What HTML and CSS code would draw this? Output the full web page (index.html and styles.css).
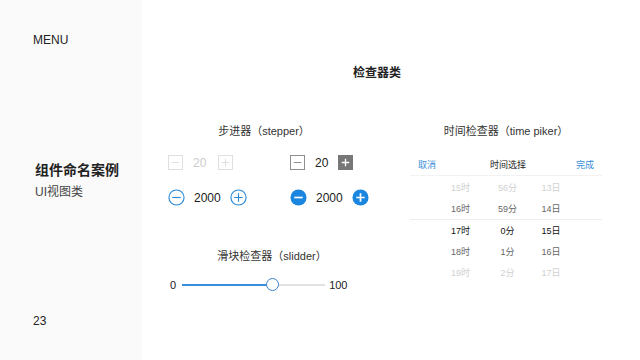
FILE: index.html
```html
<!DOCTYPE html>
<html lang="zh">
<head>
    <meta charset="UTF-8">
    <title>组件命名案例</title>
    <link rel="stylesheet" href="styles.css">
</head>
<body>
    <div class="sidebar">
        <div class="menu">MENU</div>
        <div class="section">
            <div class="section-title">组件命名案例</div>
            <div class="section-sub">UI视图类</div>
        </div>
        <div class="page-num">23</div>
    </div>

    <div class="main">
        <h1>检查器类</h1>
        <div class="columns">
            <div class="col-left">
                <div class="block-title stepper-title">步进器（stepper）</div>
                <div class="stepper-grid">
                    <div class="stepper">
                        <span class="sq disabled"><svg viewBox="0 0 16 16"><rect x="0.5" y="0.5" width="15" height="15"/><path d="M4 8h8"/></svg></span>
                        <span class="val faded">20</span>
                        <span class="sq disabled"><svg viewBox="0 0 16 16"><rect x="0.5" y="0.5" width="15" height="15"/><path d="M4 8h8M8 4v8"/></svg></span>
                    </div>
                    <div class="stepper">
                        <span class="sq"><svg viewBox="0 0 16 16"><rect x="0.5" y="0.5" width="15" height="15"/><path d="M4 8h8"/></svg></span>
                        <span class="val">20</span>
                        <span class="sq solid"><svg viewBox="0 0 16 16"><rect x="0" y="0" width="16" height="16"/><path d="M4 8h8M8 4v8"/></svg></span>
                    </div>
                    <div class="stepper">
                        <span class="circ"><svg viewBox="0 0 18 18"><circle cx="9" cy="9" r="8"/><path d="M4.5 9h9"/></svg></span>
                        <span class="val big">2000</span>
                        <span class="circ"><svg viewBox="0 0 18 18"><circle cx="9" cy="9" r="8"/><path d="M4.5 9h9M9 4.5v9"/></svg></span>
                    </div>
                    <div class="stepper">
                        <span class="circ filled"><svg viewBox="0 0 18 18"><circle cx="9" cy="9" r="8.5"/><path d="M4.5 9h9"/></svg></span>
                        <span class="val big">2000</span>
                        <span class="circ filled"><svg viewBox="0 0 18 18"><circle cx="9" cy="9" r="8.5"/><path d="M4.5 9h9M9 4.5v9"/></svg></span>
                    </div>
                </div>

                <div class="block-title slider-title">滑块检查器（slidder）</div>
                <div class="slider">
                    <span class="slider-num">0</span>
                    <div class="track">
                        <div class="track-fill" style="width: 63%"></div>
                        <div class="thumb" style="left: 63%"></div>
                    </div>
                    <span class="slider-num">100</span>
                </div>
            </div>

            <div class="col-right">
                <div class="block-title">时间检查器（time piker）</div>
                <div class="picker">
                    <div class="picker-head">
                        <span class="link">取消</span>
                        <span class="picker-name">时间选择</span>
                        <span class="link">完成</span>
                    </div>
                    <div class="picker-body">
                        <div class="prow far"><span>15时</span><span>56分</span><span>13日</span></div>
                        <div class="prow near"><span>16时</span><span>59分</span><span>14日</span></div>
                        <div class="prow current"><span>17时</span><span>0分</span><span>15日</span></div>
                        <div class="prow near"><span>18时</span><span>1分</span><span>16日</span></div>
                        <div class="prow far"><span>19时</span><span>2分</span><span>17日</span></div>
                    </div>
                </div>
            </div>
        </div>
    </div>
</body>
</html>
```

FILE: styles.css
```css
body {
    margin: 0;
    width: 640px;
    height: 360px;
    display: flex;
    font-family: 'Liberation Sans', 'Noto Sans CJK SC', sans-serif;
    color: #222;
    background-color: #fff;
}
.sidebar {
    width: 142px;
    background-color: #fafafa;
    display: flex;
    flex-direction: column;
    padding: 33px 0 0 33px;
    box-sizing: border-box;
}
.menu {
    font-size: 12px;
    font-weight: 500;
    color: #222;
}
.section {
    margin-top: 112px;
    padding-left: 2px;
}
.section-title {
    font-size: 14px;
    font-weight: bold;
    color: #222;
}
.section-sub {
    font-size: 12px;
    color: #444;
    margin-top: 3px;
}
.page-num {
    margin-top: 115px;
    font-size: 12px;
    color: #222;
}
.main {
    flex: 1;
    padding-top: 63px;
}
h1 {
    margin: 0;
    font-size: 12px;
    font-weight: bold;
    text-align: center;
    color: #222;
    padding-right: 28px;
}
.columns {
    display: flex;
    margin-top: 43px;
}
.col-left {
    width: 210px;
    padding-left: 26px;
    box-sizing: border-box;
}
.col-right {
    width: 192px;
    margin-left: 58px;
}
.block-title {
    font-size: 11px;
    color: #333;
    text-align: center;
    line-height: 16px;
}
.stepper-title {
    padding-left: 8px;
}
.stepper-grid {
    display: grid;
    grid-template-columns: 122px 100px;
    row-gap: 18px;
    margin-top: 15px;
}
.stepper {
    display: flex;
    align-items: center;
    height: 17px;
}
.val {
    font-size: 12px;
    color: #222;
    margin: 0 10px 0 10px;
}
.val.faded {
    color: #ccc;
    margin-right: 12px;
}
.val.big {
    margin: 0 9px 0 9px;
}
.sq svg {
    display: block;
    width: 15px;
    height: 15px;
    fill: none;
    stroke: #888;
    stroke-width: 1;
}
.sq.disabled svg {
    stroke: #ddd;
}
.sq.solid svg rect {
    fill: #777;
    stroke: none;
}
.sq.solid svg path {
    stroke: #fff;
    stroke-width: 1.4;
}
.circ svg {
    display: block;
    width: 17px;
    height: 17px;
    fill: none;
    stroke: #2b8ad8;
    stroke-width: 1.2;
}
.circ.filled svg circle {
    fill: #1a86e0;
    stroke: none;
}
.circ.filled svg path {
    stroke: #fff;
    stroke-width: 1.8;
}
.slider-title {
    margin-top: 42px;
    padding-left: 24px;
}
.slider {
    display: flex;
    align-items: center;
    margin-top: 15px;
    padding-left: 2px;
}
.slider-num {
    font-size: 11px;
    color: #222;
}
.track {
    position: relative;
    width: 143px;
    height: 2px;
    background-color: #e2e2e2;
    margin: 0 4px 0 6px;
}
.track-fill {
    height: 100%;
    background-color: #3a8ee0;
}
.thumb {
    position: absolute;
    top: -6px;
    width: 11px;
    height: 11px;
    margin-left: -6px;
    border: 1.5px solid #3a80c8;
    border-radius: 50%;
    background-color: #fff;
}
.picker {
    margin-top: 14px;
}
.picker-head {
    display: flex;
    justify-content: space-between;
    align-items: center;
    padding: 0 8px;
    height: 22px;
    border-bottom: 1px solid #f2f2f2;
    font-size: 9px;
}
.link {
    color: #3a90d8;
}
.picker-name {
    color: #222;
    padding-left: 4px;
}
.picker-body {
    padding-top: 1px;
}
.prow {
    display: grid;
    grid-template-columns: 47px 47px 40px;
    padding-left: 27px;
    height: 21px;
    align-items: center;
    font-size: 9px;
    text-align: center;
}
.prow.far {
    color: #d0d0d0;
}
.prow.near {
    color: #666;
}
.prow.current {
    color: #111;
    border-top: 1px solid #eee;
}
```
